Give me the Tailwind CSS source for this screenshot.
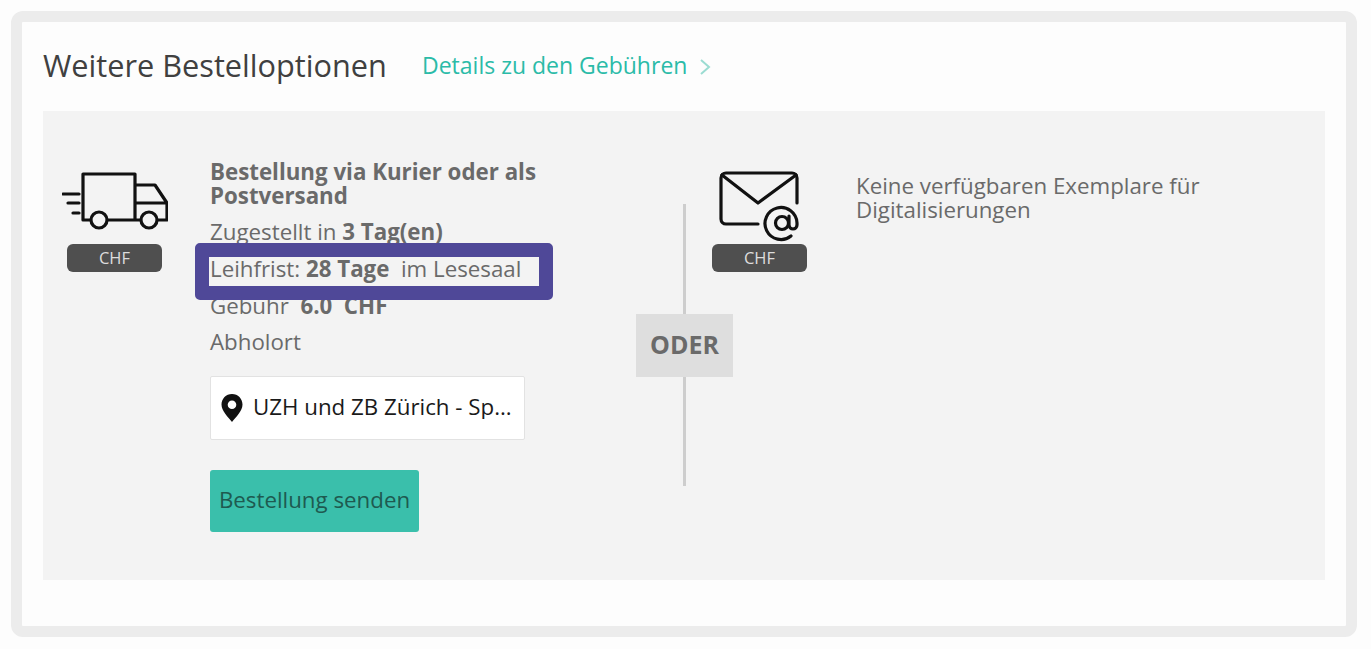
<!doctype html>
<html lang="de">
  <head>
    <meta charset="UTF-8" />
    <title>Weitere Bestelloptionen</title>
    <script src="https://cdn.jsdelivr.net/npm/@tailwindcss/browser@4"></script>
  </head>
  <body class="bg-[#fdfdfd] font-['Open_Sans',sans-serif] h-[649px] overflow-hidden">
    <div class="pt-[11px] pl-[11px] w-[1357px]">
      <div class="relative h-[626px] border-[11px] border-[#ececec] rounded-[12px] bg-[#fdfdfd] px-[21px]">
        <!-- Header -->
        <div class="flex items-center h-[89px] pb-[3px]">
          <h2 class="text-[30.7px] text-[#404040] w-[379px] whitespace-nowrap">Weitere Bestelloptionen</h2>
          <a href="#" class="flex items-center text-[23px] text-[#2bbba8] whitespace-nowrap">
            Details zu den Gebühren
            <svg class="w-[12px] h-[18px] ml-[12px] mt-[4px]" viewBox="0 0 12 18" fill="none" stroke="#9bdcd2" stroke-width="2"><path d="M2 2l8 7-8 7" /></svg>
          </a>
        </div>

        <!-- Options -->
        <div class="flex h-[469px] w-[1282px] bg-[#f3f3f3] text-[#6a6a6a] text-[22.3px] leading-[24px]">
          <!-- Courier -->
          <div class="w-[167px] pl-[19px] pt-[61px] shrink-0">
            <svg class="block w-[106px] h-[58px]" viewBox="0 0 106 58" fill="none" stroke="#111111" stroke-width="3.2" stroke-linejoin="round">
              <path d="M29 48H21V2h52v46H45M73 48h6" />
              <path d="M73 13h20l12 18v17h-10M73 31h32" />
              <circle cx="37" cy="48" r="8" />
              <circle cx="87" cy="48" r="8" />
              <path d="M1 22h16M6 31h11M11 41h6" stroke-linecap="round" />
            </svg>
            <div class="w-[95px] h-[28px] ml-[5px] mt-[14px] bg-[#4f4f4f] rounded-[6px] text-[#dddddd] text-[16.5px] leading-[28px] text-center">CHF</div>
          </div>
          <div class="w-[426px] shrink-0 pt-[49px]">
            <div class="w-[340px] font-bold">Bestellung via Kurier oder als Postversand</div>
            <div class="mt-[12px] h-[37px]">Zugestellt in <b>3 Tag(en)</b></div>
            <div class="h-[37px]">Leihfrist: <b>28 Tage</b>&nbsp; im Lesesaal</div>
            <div class="h-[36px]">Gebühr &nbsp;<b>6.0 &nbsp;CHF</b></div>
            <div>Abholort</div>
            <div class="flex items-center gap-[10px] w-[315px] h-[64px] mt-[22px] pb-[2px] px-[10px] bg-white border border-[#e2e2e2] rounded-[2px] text-[#1a1a1a]">
              <svg class="w-[22px] h-[28px] shrink-0 mt-[2px]" viewBox="0 0 22 28"><path fill="#111111" fill-rule="evenodd" d="M11 0C5 0 .5 4.700.5 10.500.5 17 7 23 11 28c4-5 10.500-11 10.500-17.500C21.500 4.700 17 0 11 0zm0 6.500a4.300 4.300 0 1 1 0 8.600 4.300 4.300 0 0 1 0-8.600z" /></svg>
              <span class="truncate">UZH und ZB Zürich - Spezialsammlungen</span>
            </div>
            <button class="block w-[209px] h-[62px] mt-[30px] pb-[2px] bg-[#3abfab] rounded-[3px] text-[#1e5a50] text-[22.3px]">Bestellung senden</button>
          </div>

          <!-- Divider -->
          <div class="w-[97px] shrink-0 pt-[93px] flex flex-col items-center">
            <div class="w-[3px] h-[110px] bg-[#cdcdcd]"></div>
            <div class="w-[97px] h-[63px] bg-[#dedede] text-[25px] font-bold leading-[61px] text-center">ODER</div>
            <div class="w-[3px] h-[109px] bg-[#cdcdcd]"></div>
          </div>

          <!-- Digital -->
          <div class="w-[144px] ml-[-21px] pt-[60px] shrink-0">
            <svg class="block w-[82px] h-[71px] ml-[7px]" viewBox="0 0 82 71" fill="none" stroke="#111111" stroke-width="3.200" stroke-linecap="round" stroke-linejoin="round">
              <path d="M78 32V7a5 5 0 0 0-5-5H7a5 5 0 0 0-5 5v41a5 5 0 0 0 5 5h32" />
              <path d="M3 4l36 28L77 4" />
              <circle cx="63" cy="52" r="6.500" />
              <path d="M70 45v9a4 4 0 0 0 8 0v-2a16 16 0 1 0-6 13" />
            </svg>
            <div class="w-[95px] h-[28px] mt-[2px] bg-[#4f4f4f] rounded-[6px] text-[#dddddd] text-[16.5px] leading-[28px] text-center">CHF</div>
          </div>
          <div class="w-[360px] pt-[63px]">Keine verfügbaren Exemplare für Digitalisierungen</div>
        </div>

        <!-- Annotation frame -->
        <div class="absolute left-[173px] top-[221px] w-[358px] h-[57px] border-[14px] border-[#4f4898] rounded-[5px]"></div>
      </div>
    </div>
  </body>
</html>
